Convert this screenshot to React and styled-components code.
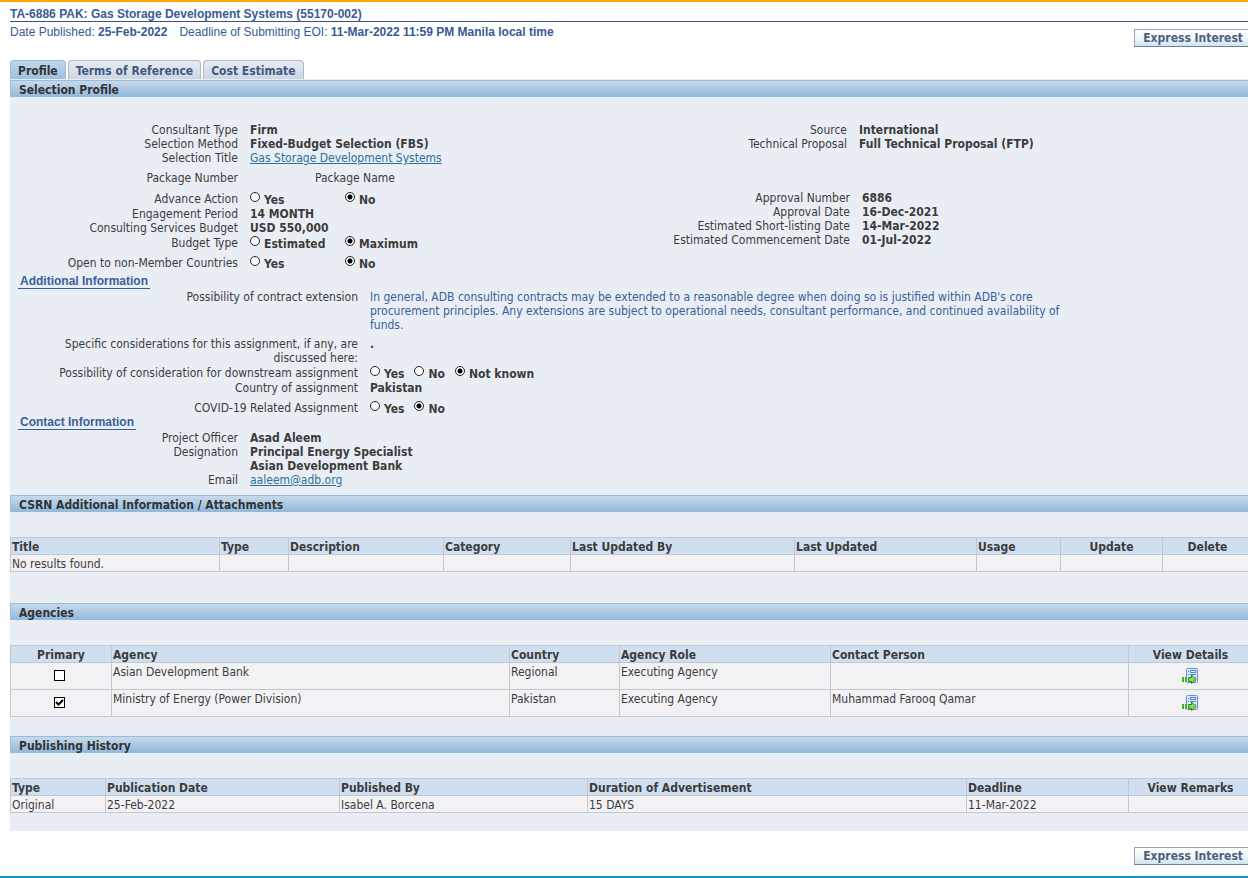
import { useId } from "react";
import styled, { createGlobalStyle, css } from "styled-components";

const attachmentColumns = [
  { label: "Title", width: 209 },
  { label: "Type", width: 69 },
  { label: "Description", width: 155 },
  { label: "Category", width: 127 },
  { label: "Last Updated By", width: 224 },
  { label: "Last Updated", width: 182 },
  { label: "Usage", width: 84 },
  { label: "Update", width: 102, centered: true },
  { label: "Delete", centered: true },
];

const agencyColumns = [
  { label: "Primary", width: 101, centered: true },
  { label: "Agency", width: 398 },
  { label: "Country", width: 110 },
  { label: "Agency Role", width: 211 },
  { label: "Contact Person", width: 298 },
  { label: "View Details", centered: true },
];

const historyColumns = [
  { label: "Type", width: 95 },
  { label: "Publication Date", width: 234 },
  { label: "Published By", width: 248 },
  { label: "Duration of Advertisement", width: 379 },
  { label: "Deadline", width: 162 },
  { label: "View Remarks", centered: true },
];

const agencies = [
  {
    name: "Asian Development Bank",
    country: "Regional",
    role: "Executing Agency",
    contact: "",
    primary: false,
  },
  {
    name: "Ministry of Energy (Power Division)",
    country: "Pakistan",
    role: "Executing Agency",
    contact: "Muhammad Farooq Qamar",
    primary: true,
  },
];

function Field({ label, gap, children }) {
  return (
    <StyledField $gap={gap}>
      <dt>{label}</dt>
      <dd>{children}</dd>
    </StyledField>
  );
}

function RadioGroup({ label, options, selected, wide }) {
  const name = useId();

  return (
    <StyledRadioGroup role="radiogroup" aria-label={label} $wide={wide}>
      {options.map((option) => (
        <label key={option}>
          <input type="radio" name={name} defaultChecked={option === selected} />
          <span>{option}</span>
        </label>
      ))}
    </StyledRadioGroup>
  );
}

function DataTable({ columns, children }) {
  return (
    <StyledTable>
      <colgroup>
        {columns.map(({ label, width }) => (
          <StyledCol key={label} $width={width} />
        ))}
      </colgroup>
      <thead>
        <tr>
          {columns.map(({ label, centered }) => (
            <StyledTh key={label} scope="col" $centered={centered}>
              {label}
            </StyledTh>
          ))}
        </tr>
      </thead>
      <tbody>{children}</tbody>
    </StyledTable>
  );
}

function DetailsIcon() {
  return (
    <svg width="17" height="17" viewBox="0 0 17 17" aria-hidden="true">
      <rect x="4.5" y="1.500" width="11" height="14" rx="1" fill="#dfebfd" stroke="#5f8fe6" />
      <path d="M6 4h1v1H6zM6 7h1v1H6z" fill="#3f74d8" />
      <rect x="8.5" y="3.5" width="5" height="2" fill="#fff" stroke="#4f80dd" />
      <path d="M8 7.500h6M13 10.500h1M13 13.500h1" stroke="#4f80dd" />
      <path d="M0 10h2v5H0zM3 10h2v5H3z" fill="#45b01f" />
      <path
        d="M6.500 10.500h3v-2.500l4.500 4.500-4.500 4v-2h-3z"
        fill="#86e04a"
        stroke="#23861a"
        strokeLinejoin="round"
      />
    </svg>
  );
}

export default function App() {
  return (
    <>
      <GlobalStyle />
      <StyledPage>
        <StyledHeader>
          <h1>TA-6886 PAK: Gas Storage Development Systems (55170-002)</h1>
          <StyledHeaderRow>
            <p>
              <span>
                Date Published: <strong>25-Feb-2022</strong>
              </span>
              <span>
                Deadline of Submitting EOI:{" "}
                <strong>11-Mar-2022 11:59 PM Manila local time</strong>
              </span>
            </p>
            <StyledButton type="button">Express Interest</StyledButton>
          </StyledHeaderRow>
        </StyledHeader>

        <StyledTabs>
          <StyledTab href="#profile" $active>
            Profile
          </StyledTab>
          <StyledTab href="#terms">Terms of Reference</StyledTab>
          <StyledTab href="#cost">Cost Estimate</StyledTab>
        </StyledTabs>

        <StyledPanel>
          <StyledSectionTitle>Selection Profile</StyledSectionTitle>
          <StyledProfile>
            <StyledHalves>
              <StyledFields $labelWidth={228}>
                <Field label="Consultant Type">Firm</Field>
                <Field label="Selection Method">Fixed-Budget Selection (FBS)</Field>
                <Field label="Selection Title">
                  <a href="#title">Gas Storage Development Systems</a>
                </Field>
              </StyledFields>
              <StyledFields $labelWidth={218}>
                <Field label="Source">International</Field>
                <Field label="Technical Proposal">Full Technical Proposal (FTP)</Field>
              </StyledFields>
            </StyledHalves>
            <StyledFields $labelWidth={228}>
              <Field label="Package Number" gap={6}>
                <StyledPackageName>Package Name</StyledPackageName>
              </Field>
            </StyledFields>
            <StyledHalves>
              <StyledFields $labelWidth={228}>
                <Field label="Advance Action" gap={7}>
                  <RadioGroup label="Advance Action" options={["Yes", "No"]} selected="No" wide />
                </Field>
                <Field label="Engagement Period" gap={1}>
                  14 MONTH
                </Field>
                <Field label="Consulting Services Budget">USD 550,000</Field>
                <Field label="Budget Type" gap={1}>
                  <RadioGroup
                    label="Budget Type"
                    options={["Estimated", "Maximum"]}
                    selected="Maximum"
                    wide
                  />
                </Field>
                <Field label="Open to non-Member Countries" gap={6}>
                  <RadioGroup
                    label="Open to non-Member Countries"
                    options={["Yes", "No"]}
                    selected="No"
                    wide
                  />
                </Field>
              </StyledFields>
              <StyledFields $labelWidth={221}>
                <Field label="Approval Number" gap={6}>
                  6886
                </Field>
                <Field label="Approval Date">16-Dec-2021</Field>
                <Field label="Estimated Short-listing Date">14-Mar-2022</Field>
                <Field label="Estimated Commencement Date">01-Jul-2022</Field>
              </StyledFields>
            </StyledHalves>

            <StyledSubtitle $gap={4}>Additional Information</StyledSubtitle>
            <StyledFields $labelWidth={348}>
              <Field label="Possibility of contract extension">
                <StyledNote>
                  In general, ADB consulting contracts may be extended to a reasonable degree when
                  doing so is justified within ADB's core procurement principles. Any extensions
                  are subject to operational needs, consultant performance, and continued
                  availability of funds.
                </StyledNote>
              </Field>
              <Field
                label={
                  <>
                    Specific considerations for this assignment, if any, are
                    <br />
                    discussed here:
                  </>
                }
                gap={5}
              >
                .
              </Field>
              <Field label="Possibility of consideration for downstream assignment" gap={1}>
                <RadioGroup
                  label="Possibility of consideration for downstream assignment"
                  options={["Yes", "No", "Not known"]}
                  selected="Not known"
                />
              </Field>
              <Field label="Country of assignment" gap={1}>
                Pakistan
              </Field>
              <Field label="COVID-19 Related Assignment" gap={6}>
                <RadioGroup
                  label="COVID-19 Related Assignment"
                  options={["Yes", "No"]}
                  selected="No"
                />
              </Field>
            </StyledFields>

            <StyledSubtitle>Contact Information</StyledSubtitle>
            <StyledFields $labelWidth={228}>
              <Field label="Project Officer">Asad Aleem</Field>
              <Field label="Designation">
                Principal Energy Specialist
                <br />
                Asian Development Bank
              </Field>
              <Field label="Email">
                <a href="mailto:aaleem@adb.org">aaleem@adb.org</a>
              </Field>
            </StyledFields>
          </StyledProfile>

          <StyledSectionTitle>CSRN Additional Information / Attachments</StyledSectionTitle>
          <StyledTableSection $bottom={31}>
            <DataTable columns={attachmentColumns}>
              <tr>
                <StyledTd>No results found.</StyledTd>
                {attachmentColumns.slice(1).map(({ label }) => (
                  <StyledTd key={label} />
                ))}
              </tr>
            </DataTable>
          </StyledTableSection>

          <StyledSectionTitle>Agencies</StyledSectionTitle>
          <StyledTableSection $bottom={19}>
            <DataTable columns={agencyColumns}>
              {agencies.map(({ name, country, role, contact, primary }) => (
                <tr key={name}>
                  <StyledTd $control>
                    <StyledCheckbox
                      type="checkbox"
                      aria-label={`${name} is primary`}
                      defaultChecked={primary}
                    />
                  </StyledTd>
                  <StyledTd>{name}</StyledTd>
                  <StyledTd>{country}</StyledTd>
                  <StyledTd>{role}</StyledTd>
                  <StyledTd>{contact}</StyledTd>
                  <StyledTd $control>
                    <StyledIconButton type="button" aria-label={`View details of ${name}`}>
                      <DetailsIcon />
                    </StyledIconButton>
                  </StyledTd>
                </tr>
              ))}
            </DataTable>
          </StyledTableSection>

          <StyledSectionTitle>Publishing History</StyledSectionTitle>
          <StyledTableSection $bottom={18}>
            <DataTable columns={historyColumns}>
              <tr>
                <StyledTd>Original</StyledTd>
                <StyledTd>25-Feb-2022</StyledTd>
                <StyledTd>Isabel A. Borcena</StyledTd>
                <StyledTd>15 DAYS</StyledTd>
                <StyledTd>11-Mar-2022</StyledTd>
                <StyledTd />
              </tr>
            </DataTable>
          </StyledTableSection>
        </StyledPanel>

        <StyledFooter>
          <StyledButton type="button">Express Interest</StyledButton>
        </StyledFooter>
      </StyledPage>
    </>
  );
}

const GlobalStyle = createGlobalStyle`
  *,
  *::before,
  *::after {
    box-sizing: border-box;
  }

  body {
    margin: 0;
    background: #ffffff;
    color: #3c3c3c;
    font: 12px/14px Tahoma, "DejaVu Sans Condensed", sans-serif;
  }
`;

const StyledPage = styled.main`
  border-top: 2px solid #ffaa00;
  border-bottom: 2px solid #1295cb;
`;

const StyledHeader = styled.header`
  padding: 5px 0 0 10px;
  color: #3a5a94;
  font-family: Arial, "Liberation Sans", sans-serif;

  h1 {
    margin: 0;
    border-bottom: 1px solid #3a5386;
    font-size: 12px;
    line-height: 14px;
  }
`;

const StyledHeaderRow = styled.div`
  display: flex;
  justify-content: space-between;
  align-items: flex-start;
  padding-top: 3px;

  p {
    display: flex;
    gap: 12px;
    margin: 0;
  }

  button {
    margin-top: 4px;
  }
`;

const StyledButton = styled.button`
  height: 18px;
  padding: 0 5px 0 8px;
  border: 1px solid #9aa3b5;
  border-bottom-color: #6f7f9d;
  border-right: 0;
  background: linear-gradient(#ffffff, #f0f8fb 50%, #cfe5ee);
  color: #4f607f;
  font: bold 12px/14px Tahoma, "DejaVu Sans Condensed", sans-serif;
`;

const StyledTabs = styled.nav`
  display: flex;
  gap: 2px;
  padding: 13px 0 0 10px;
`;

const StyledTab = styled.a`
  height: 19px;
  padding: 3px 7px 0;
  border: 1px solid #b4b8c0;
  border-bottom: 0;
  border-radius: 4px 4px 0 0;
  background: linear-gradient(#e4ebf4, #ccd7e3);
  color: #44597f;
  font-weight: bold;
  text-decoration: none;

  ${({ $active }) =>
    $active &&
    css`
      border-color: #9dbcd8;
      background: linear-gradient(#bfd6eb, #9dc1e0);
      color: #333333;
    `};
`;

const StyledPanel = styled.section`
  margin-left: 10px;
  padding-top: 1px;
  background: #e9eef5;
`;

const StyledSectionTitle = styled.h2`
  height: 17px;
  margin: 0;
  padding: 2px 8px 0;
  border: 1px solid #9dbcd8;
  border-right: 0;
  border-bottom: 0;
  background: linear-gradient(#c8daec, #90b8da);
  color: #333333;
  font-size: 12px;
  line-height: 14px;
`;

const StyledProfile = styled.div`
  padding: 26px 0 8px;

  a {
    color: #2e7098;
    font-weight: normal;
  }
`;

const StyledHalves = styled.div`
  display: grid;
  grid-template-columns: 1fr 1fr;
  align-items: start;
`;

const StyledFields = styled.dl`
  --label-width: ${({ $labelWidth }) => $labelWidth}px;
  margin: 0;
`;

const StyledField = styled.div`
  display: grid;
  grid-template-columns: var(--label-width) 1fr;
  column-gap: 12px;
  padding-top: ${({ $gap = 0 }) => $gap}px;

  dt {
    text-align: right;
  }

  dd {
    margin: 0;
    font-weight: bold;
  }
`;

const StyledPackageName = styled.span`
  padding-left: 65px;
  font-weight: normal;
`;

const StyledRadioGroup = styled.div`
  display: flex;
  gap: 10px;
  height: 14px;

  label {
    display: flex;
    gap: 4px;
    ${({ $wide }) =>
      $wide &&
      css`
        min-width: 85px;
      `};
  }

  input {
    appearance: none;
    width: 10px;
    height: 10px;
    margin: 0;
    border: 1px solid #222222;
    border-radius: 50%;
    background: #ffffff;
  }

  input:checked {
    background: radial-gradient(circle, #000000 2px, #ffffff 3px);
  }

  span {
    padding-top: 1px;
  }
`;

const StyledSubtitle = styled.h3`
  width: fit-content;
  margin: ${({ $gap = 0 }) => $gap}px 0 1px 8px;
  padding: 0 2px;
  border-bottom: 1px solid #3a5f9a;
  color: #3a5f9a;
  font: bold 12px/14px Arial, "Liberation Sans", sans-serif;
`;

const StyledNote = styled.p`
  max-width: 700px;
  margin: 0;
  color: #3a5f9a;
  font-weight: normal;
`;

const StyledTableSection = styled.div`
  padding: 25px 0 ${({ $bottom }) => $bottom}px;
`;

const StyledTable = styled.table`
  width: 100%;
  table-layout: fixed;
  border-collapse: separate;
  border-spacing: 0;
  border-top: 1px solid #c3c7cf;
  border-left: 1px solid #c3c7cf;
`;

const StyledCol = styled.col`
  width: ${({ $width }) => ($width ? `${$width}px` : "auto")};
`;

const cell = css`
  height: 17px;
  padding: 2px 1px 0;
  border-right: 1px solid #c3c7cf;
  border-bottom: 1px solid #c3c7cf;
  vertical-align: top;

  &:last-child {
    padding-left: 5px;
    border-right: 0;
  }
`;

const StyledTh = styled.th`
  ${cell}
  background: #cfdff0;
  text-align: ${({ $centered }) => ($centered ? "center" : "left")};
`;

const StyledTd = styled.td`
  ${cell}
  background: #f2f2f5;

  ${({ $control }) =>
    $control &&
    css`
      height: 27px;
      padding: 0 4px 1px 1px;
      text-align: center;
      vertical-align: middle;

      &:last-child {
        padding: 0 1px 1px 5px;
      }
    `};
`;

const StyledCheckbox = styled.input`
  appearance: none;
  display: block;
  width: 11px;
  height: 11px;
  margin: 0 auto;
  border: 1px solid #000000;
  background: #ffffff;

  &:checked {
    background: #ffffff
      url("data:image/svg+xml,%3Csvg xmlns='http://www.w3.org/2000/svg' viewBox='0 0 9 9'%3E%3Cpath d='M1 4l2.500 2.500L8 2' fill='none' stroke='%23000' stroke-width='2'/%3E%3C/svg%3E");
  }
`;

const StyledIconButton = styled.button`
  display: block;
  margin: 0 auto;
  padding: 0;
  border: 0;
  background: none;

  svg {
    display: block;
  }
`;

const StyledFooter = styled.footer`
  display: flex;
  justify-content: flex-end;
  padding: 16px 0 11px;
`;
